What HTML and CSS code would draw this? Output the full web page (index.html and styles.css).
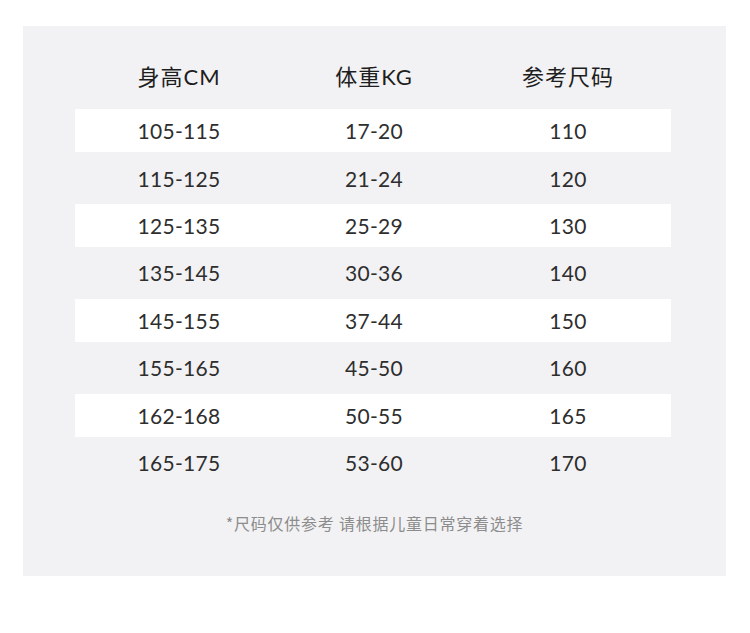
FILE: index.html
```html
<!DOCTYPE html>
<html lang="zh">
<head>
<meta charset="utf-8">
<link rel="stylesheet" href="styles.css">
</head>
<body>
<div class="panel">
  <div class="table">
    <div class="row head">
      <div class="cell">身高CM</div>
      <div class="cell">体重KG</div>
      <div class="cell">参考尺码</div>
    </div>
    <div class="row alt"><div class="cell">105-115</div><div class="cell">17-20</div><div class="cell">110</div></div>
    <div class="row"><div class="cell">115-125</div><div class="cell">21-24</div><div class="cell">120</div></div>
    <div class="row alt"><div class="cell">125-135</div><div class="cell">25-29</div><div class="cell">130</div></div>
    <div class="row"><div class="cell">135-145</div><div class="cell">30-36</div><div class="cell">140</div></div>
    <div class="row alt"><div class="cell">145-155</div><div class="cell">37-44</div><div class="cell">150</div></div>
    <div class="row"><div class="cell">155-165</div><div class="cell">45-50</div><div class="cell">160</div></div>
    <div class="row alt"><div class="cell">162-168</div><div class="cell">50-55</div><div class="cell">165</div></div>
    <div class="row"><div class="cell">165-175</div><div class="cell">53-60</div><div class="cell">170</div></div>
  </div>
  <p class="note">*尺码仅供参考 请根据儿童日常穿着选择</p>
</div>
</body>
</html>
```
FILE: styles.css
```css
html, body {
  margin: 0;
  padding: 0;
  background: #ffffff;
}
body {
  font-family: Lato, "Noto Sans CJK SC", sans-serif;
  color: #2e2e2e;
}
.panel {
  margin: 26px 0 0 23px;
  width: 703px;
  height: 550px;
  box-sizing: border-box;
  background: #f2f2f4;
  padding-top: 31px;
}
.table {
  margin-left: 52px;
  width: 596px;
}
.row {
  display: grid;
  grid-template-columns: 208px 182px 206px;
  height: 47.4px;
  align-items: center;
  font-size: 21px;
  font-weight: 400;
  letter-spacing: 0.3px;
}
.row.alt {
  background: linear-gradient(#ffffff, #ffffff) center / 100% 43px no-repeat;
}
.cell {
  text-align: center;
  line-height: 1;
}
.row.head {
  height: 40px;
  margin-bottom: 10px;
  font-size: 22px;
  color: #1e1e1e;
  letter-spacing: 1px;
}
.note {
  margin: 27px 0 0;
  text-align: center;
  line-height: 20px;
  font-size: 16px;
  color: #8c8c8c;
  font-family: "Noto Sans CJK SC", sans-serif;
  letter-spacing: 0.75px;
}
```
